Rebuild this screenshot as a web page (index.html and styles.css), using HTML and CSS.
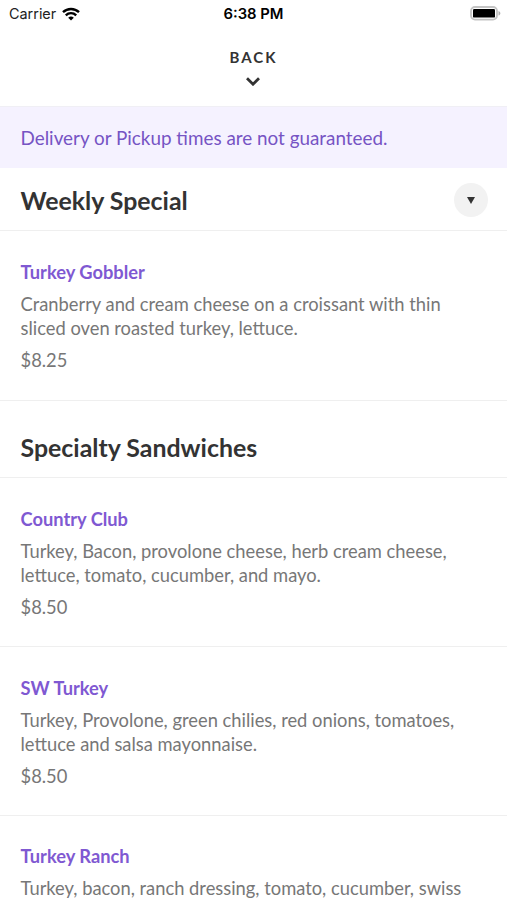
FILE: index.html
```html
<!DOCTYPE html>
<html lang="en">
<head>
  <meta charset="UTF-8" />
  <title>Menu</title>
  <meta name="viewport" content="width=device-width, initial-scale=1.0" />
  <link rel="stylesheet" href="styles.css">
</head>
<body>
  <div class="status-bar">
    <div class="carrier">
      <span>Carrier</span>
      <svg class="wifi" viewBox="0 0 18 14" width="18" height="14">
        <path d="M1 5.200a11.500 11.500 0 0 1 16 0M3.800 8.300a7.400 7.400 0 0 1 10.400 0" fill="none" stroke="#000" stroke-width="2.400"/>
        <path d="M9 13.600L6.200 10.800a4 4 0 0 1 5.600 0z"/>
      </svg>
    </div>
    <div class="time">6:38 PM</div>
    <svg class="battery" viewBox="0 0 31 15" width="31" height="15">
      <rect x="1" y="1" width="26" height="12.600" rx="4" fill="none" stroke="#c4c4c4" stroke-width="1.800"/>
      <rect x="3" y="3" width="22" height="8.600" rx="1.200"/>
      <path d="M28.500 5C31 6 31 8.600 28.500 9.600z" fill="#b0b0b0"/>
    </svg>
  </div>

  <header class="back">
    <span class="back-label">BACK</span>
    <svg viewBox="0 0 14 9" width="14" height="9">
      <path d="M1 1.300L7 7.200l6-5.900" fill="none" stroke="#333" stroke-width="2.800"/>
    </svg>
  </header>

  <div class="notice">Delivery or Pickup times are not guaranteed.</div>

  <section>
    <div class="section-head first">
      <h2>Weekly Special</h2>
      <button class="toggle" aria-label="Choose section">
        <svg viewBox="0 0 8 7" width="8" height="7"><path d="M0 0h8L4 7z" fill="#333"/></svg>
      </button>
    </div>
    <div class="item">
      <h3>Turkey Gobbler</h3>
      <p>Cranberry and cream cheese on a croissant with thin<br>sliced oven roasted turkey, lettuce.</p>
      <div class="price">$8.25</div>
    </div>
  </section>

  <section>
    <div class="section-head">
      <h2>Specialty Sandwiches</h2>
    </div>
    <div class="item">
      <h3>Country Club</h3>
      <p>Turkey, Bacon, provolone cheese, herb cream cheese,<br>lettuce, tomato, cucumber, and mayo.</p>
      <div class="price">$8.50</div>
    </div>
    <div class="item">
      <h3>SW Turkey</h3>
      <p>Turkey, Provolone, green chilies, red onions, tomatoes,<br>lettuce and salsa mayonnaise.</p>
      <div class="price">$8.50</div>
    </div>
    <div class="item last">
      <h3>Turkey Ranch</h3>
      <p>Turkey, bacon, ranch dressing, tomato, cucumber, swiss</p>
    </div>
  </section>
</body>
</html>
```
FILE: styles.css
```css
* {
  box-sizing: border-box;
}

html, body {
  margin: 0;
  padding: 0;
  background: white;
  color: #333;
  font-family: Lato, sans-serif;
}

h2, h3, p {
  margin: 0;
}

.status-bar {
  display: grid;
  grid-template-columns: 1fr auto 1fr;
  align-items: center;
  height: 27px;
  padding: 0 6px 0 9px;
  font-family: Inter, sans-serif;
  font-size: 14.4px;
  color: black;
}

.carrier {
  display: flex;
  align-items: center;
  gap: 6px;
  color: #222;
}

.time {
  margin: 1px 3px 0 0;
  font-size: 14.8px;
  font-weight: 600;
}

.battery {
  justify-self: end;
}

.back {
  display: flex;
  flex-direction: column;
  align-items: center;
  height: 80px;
  padding: 21px 1px 0 0;
  gap: 10px;
  border-bottom: 1px solid #f0eff5;
}

.back-label {
  margin-right: -1px;
  font-size: 15px;
  font-weight: 700;
  line-height: 19px;
  letter-spacing: 2px;
}

.notice {
  height: 61px;
  padding-left: 20.5px;
  line-height: 62px;
  font-size: 18.87px;
  color: #7654c4;
  background: #f5f2ff;
}

.section-head {
  display: flex;
  align-items: center;
  justify-content: space-between;
  height: 77px;
  padding: 16px 19px 0 20.5px;
  border-bottom: 1px solid #efefef;
}

.section-head.first {
  height: 63px;
  padding-top: 2px;
}

h2 {
  font-size: 24.9px;
  font-weight: 700;
}

.toggle {
  display: flex;
  align-items: center;
  justify-content: center;
  width: 34px;
  height: 34px;
  padding: 0;
  border: none;
  border-radius: 50%;
  background: #f2f2f2;
}

.item {
  height: 169px;
  padding: 29px 20.5px 0;
  border-bottom: 1px solid #efefef;
  color: #777;
  font-size: 18.33px;
  line-height: 24.5px;
}

.section-head.first + .item {
  height: 170px;
  padding-top: 29px;
}

.item.last {
  height: 84px;
  padding-top: 28px;
  overflow: hidden;
  border-bottom: none;
}

h3 {
  margin-bottom: 7px;
  font-size: 18.3px;
  font-weight: 700;
  color: #7f59d2;
}

.price {
  margin-top: 7px;
}
```
